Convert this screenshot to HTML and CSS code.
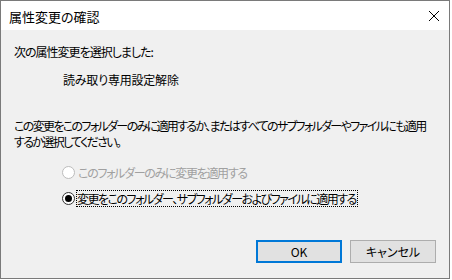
FILE: index.html
```html
<!DOCTYPE html>
<html lang="ja">
<head>
    <meta charset="UTF-8">
    <title>属性変更の確認</title>
    <link rel="stylesheet" href="styles.css">
</head>
<body>

    <div class="window">
        <div class="titlebar">
            <span class="title">属性変更の確認</span>
            <svg class="close" width="12" height="12" viewBox="0 0 12 12">
                <path d="M1 1 L11 11 M11 1 L1 11" stroke="#000" stroke-width="1" fill="none"/>
            </svg>
        </div>

        <div class="content">
            <p class="line first">次の属性変更を選択しました:</p>
            <p class="line change">読み取り専用設定解除</p>
            <p class="question">この変更をこのフォルダーのみに適用するか、またはすべてのサブフォルダーやファイルにも適用<br>するか選択してください。</p>

            <div class="options">
                <div class="option disabled">
                    <span class="radio"></span>
                    <span class="label">このフォルダーのみに変更を適用する</span>
                </div>
                <div class="option">
                    <span class="radio checked"></span>
                    <span class="label focus">変更をこのフォルダー、サブフォルダーおよびファイルに適用する</span>
                </div>
            </div>

            <div class="buttons">
                <button class="btn default">OK</button>
                <button class="btn">キャンセル</button>
            </div>
        </div>
    </div>

</body>
</html>
```

FILE: styles.css
```css
body {
    margin: 0;
    padding: 0;
    background-color: #ffffff;
    font-family: "Noto Sans CJK JP", "Noto Sans", sans-serif;
    font-feature-settings: "palt";
    font-size: 12px;
    color: #000;
}

.window {
    width: 450px;
    height: 279px;
    box-sizing: border-box;
    border: 1px solid #7a7a7a;
    background-color: #f0f0f0;
}

.titlebar {
    height: 29px;
    background-color: #fff;
    display: flex;
    align-items: center;
    justify-content: space-between;
    padding: 0 9px 0 8px;
}

.title {
    font-size: 13px;
    margin-top: 1px;
}

.close {
    margin-top: 1px;
}

.content {
    padding: 0 13px;
}

.line {
    margin: 0;
    line-height: 16px;
}

.first {
    padding-top: 14px;
    letter-spacing: -1px;
}

.change {
    margin-top: 12px;
    padding-left: 49px;
    letter-spacing: -0.2px;
}

.question {
    margin: 30px 0 0;
    line-height: 16px;
    white-space: nowrap;
    letter-spacing: -1.65px;
}

.options {
    margin-top: 14px;
    padding-left: 48px;
    display: flex;
    flex-direction: column;
    gap: 10px;
}

.option {
    display: flex;
    align-items: center;
    height: 16px;
}

.radio {
    width: 13px;
    height: 13px;
    box-sizing: border-box;
    border-radius: 50%;
    border: 1px solid #333;
    background-color: #fff;
    margin-right: 3px;
    display: flex;
    align-items: center;
    justify-content: center;
}

.radio.checked::after {
    content: "";
    width: 7px;
    height: 7px;
    border-radius: 50%;
    background-color: #000;
}

.disabled .radio {
    border-color: #bcbcbc;
}

.disabled .label {
    color: #a0a0a0;
    letter-spacing: -1.3px;
}

.focus {
    outline: 1px dotted #000;
    outline-offset: 0;
    line-height: 15px;
    padding: 0 1px 0 0;
    margin-left: -1px;
    letter-spacing: -1.5px;
}

.buttons {
    margin-top: 34px;
    display: flex;
    justify-content: flex-end;
    gap: 8px;
}

.btn {
    width: 86px;
    height: 23px;
    box-sizing: border-box;
    background-color: #e1e1e1;
    border: 1px solid #adadad;
    font-family: inherit;
    font-feature-settings: "palt";
    font-size: 12px;
    color: #000;
    padding: 0;
}

.btn.default {
    border: 2px solid #0078d7;
}
```
